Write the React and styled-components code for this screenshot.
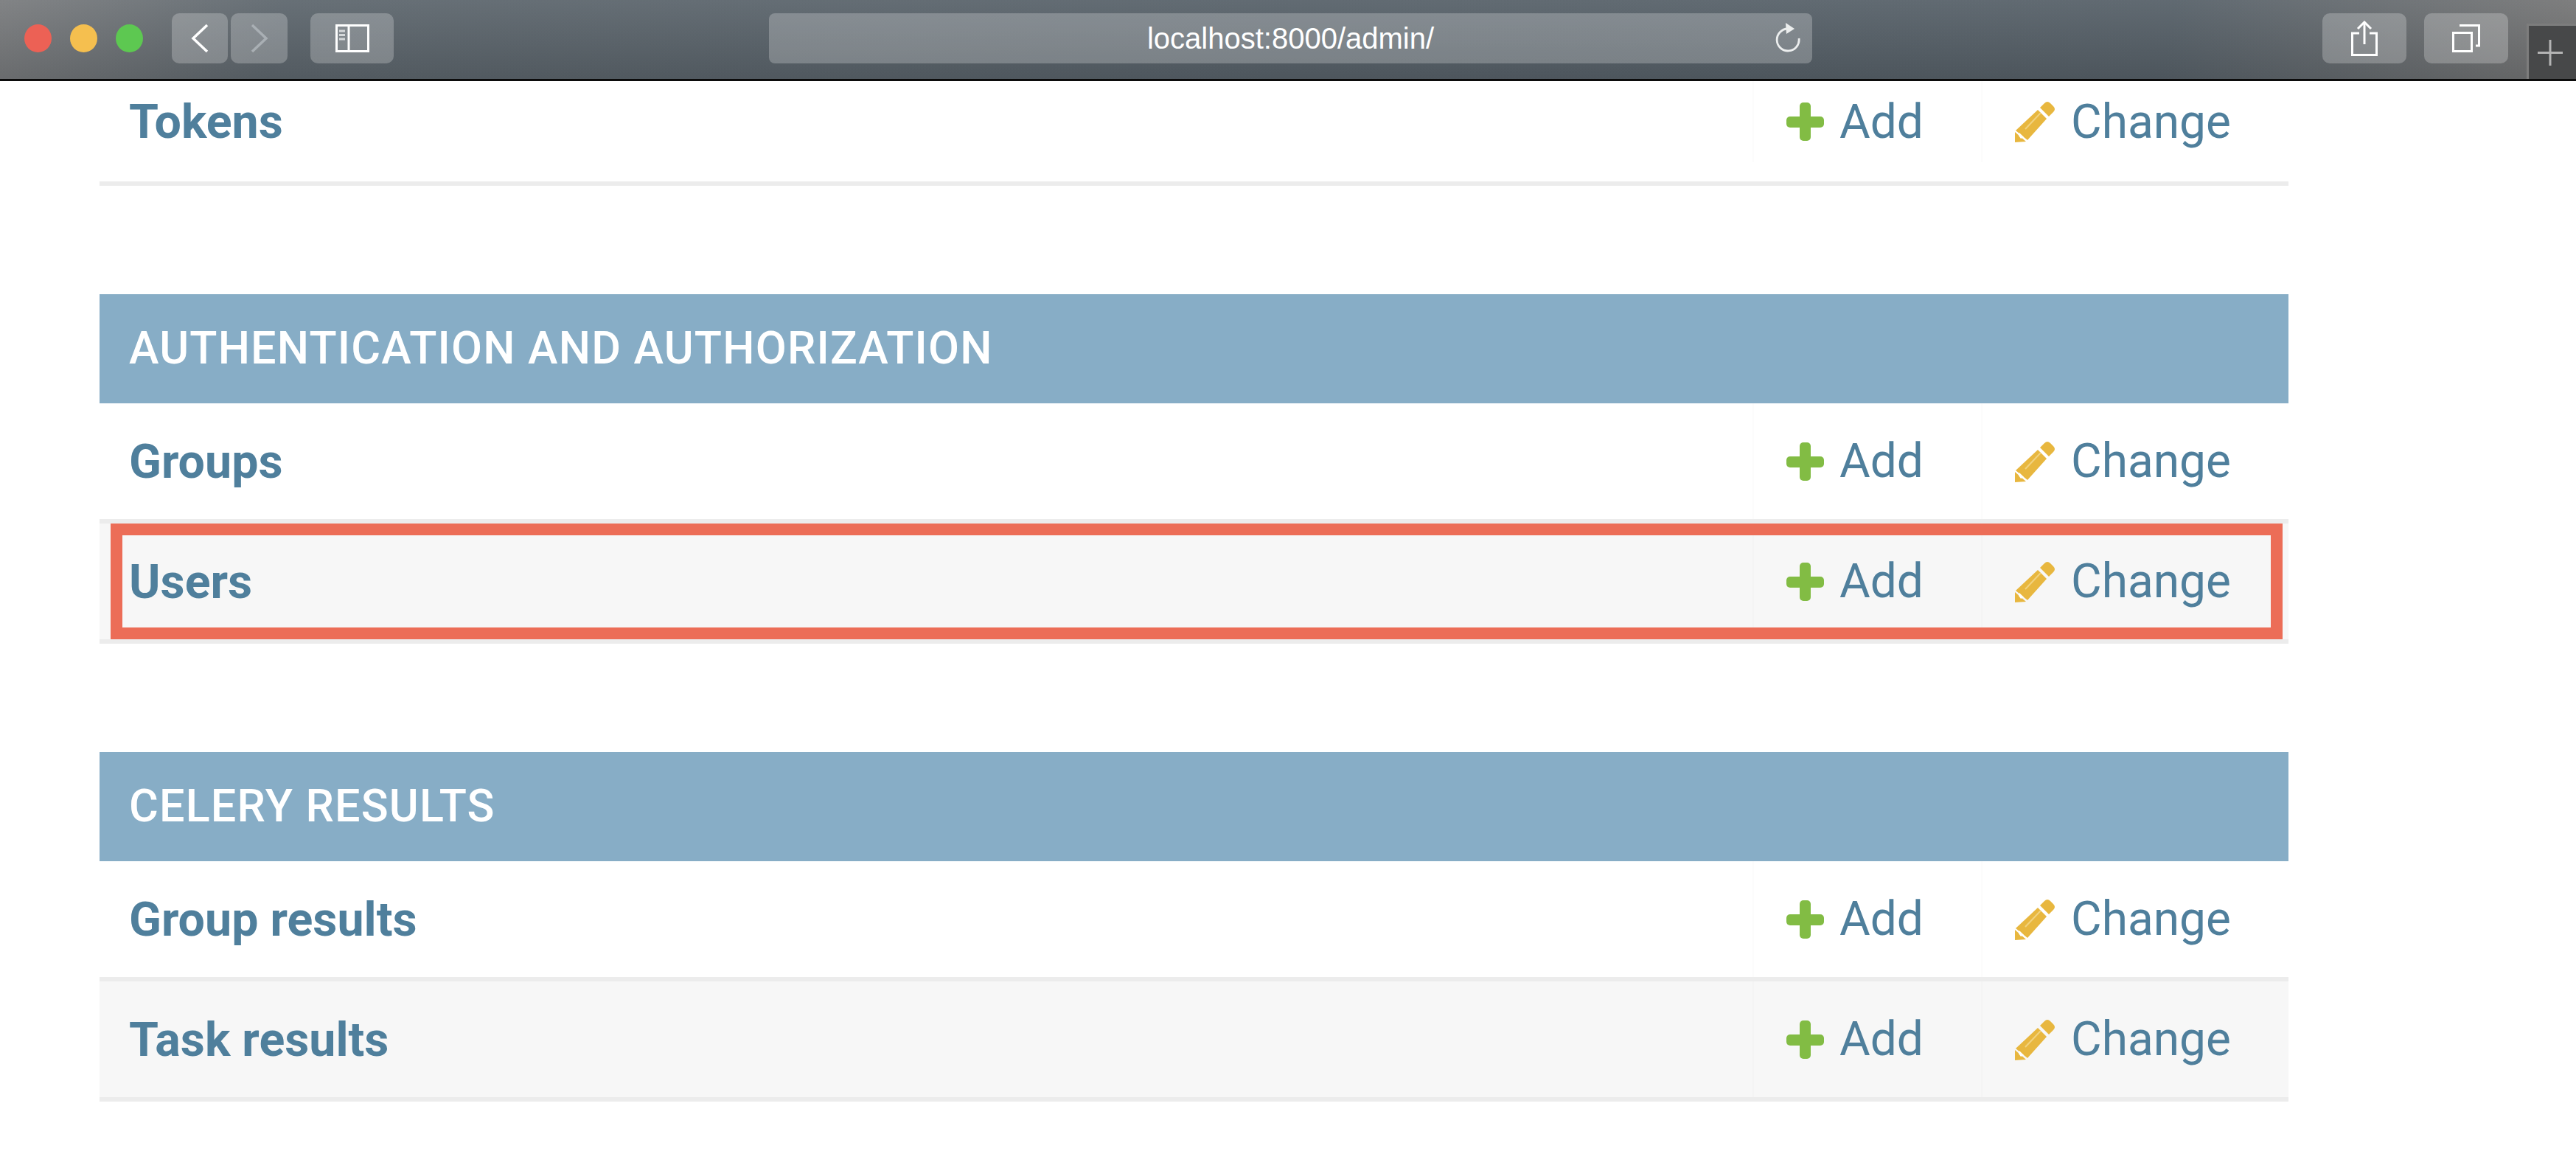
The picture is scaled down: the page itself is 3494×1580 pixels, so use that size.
import styled, { createGlobalStyle } from 'styled-components';

const GlobalStyle = createGlobalStyle`
  html, body {
    margin: 0;
    padding: 0;
    background: #fff;
    overflow: hidden;
  }
  * {
    box-sizing: border-box;
  }
`;

const Page = styled.div`
  width: 3494px;
  height: 1580px;
  overflow: hidden;
  font-family: Roboto, "Liberation Sans", sans-serif;
`;

/* browser chrome */
const Toolbar = styled.div`
  display: flex;
  align-items: flex-start;
  height: 110px;
  padding: 18px 0 0 33px;
  border-bottom: 3px solid #0c0c0c;
  background:
    linear-gradient(180deg, rgba(255, 255, 255, 0.05), rgba(0, 0, 0, 0.13)),
    linear-gradient(100deg, #7b7d7f 0%, #5f686f 11%, #59636b 50%, #58626a 84%, #787878 100%);
`;

const Lights = styled.div`
  display: flex;
  gap: 25px;
  margin: 15px 39px 0 0;
`;

const Light = styled.span`
  width: 37px;
  height: 38px;
  border-radius: 50%;
  background: ${props => props.$color};
`;

const ToolButton = styled.div`
  display: flex;
  align-items: center;
  justify-content: center;
  flex: none;
  width: ${props => props.$width}px;
  height: 68px;
  margin-left: ${props => props.$gap || 0}px;
  border-radius: 10px;
  background: rgba(255, 255, 255, 0.24);
`;

const UrlBar = styled.div`
  display: grid;
  grid-template-columns: 1fr auto 1fr;
  align-items: center;
  flex: none;
  width: 1415px;
  height: 68px;
  margin: 0 692px 0 509px;
  border-radius: 8px;
  background: rgba(255, 255, 255, 0.24);
  color: #fff;
  font-family: "Liberation Sans", Arial, sans-serif;
  font-size: 40px;
`;

const UrlText = styled.span`
  grid-column: 2;
`;

const ReloadSlot = styled.span`
  display: flex;
  justify-content: flex-end;
  padding-right: 16px;
`;

const NewTab = styled.div`
  display: flex;
  align-items: center;
  justify-content: center;
  flex: 1;
  height: 75px;
  margin: 14px 0 0 25px;
  padding-right: 6px;
  border-top: 3px solid #7d7d7d;
  border-left: 3px solid #7d7d7d;
  background: #474849;
`;

/* admin tables */
const Content = styled.div`
  padding: 0 390px 0 135px;
`;

const Section = styled.section`
  margin-bottom: 147px;
`;

const Caption = styled.div`
  display: flex;
  align-items: center;
  height: 148px;
  padding: 0 40px 2px;
  background: #87adc6;
  color: #fff;
  font-size: 61px;
  font-weight: 500;
  letter-spacing: 1.2px;
`;

const Row = styled.div`
  position: relative;
  display: grid;
  grid-template-columns: 1fr 310px 417px;
  align-items: stretch;
  height: ${props => (props.$clipped ? 142 : 163)}px;
  padding-bottom: ${props => (props.$clipped ? 26 : 0)}px;
  border-bottom: 6px solid #ececec;
  background: ${props => (props.$alt ? '#f7f7f7' : '#fff')};
  color: #4f7f9c;
  font-size: 64px;
`;

const Name = styled.div`
  display: flex;
  align-items: center;
  padding-left: 40px;
  font-size: 64.5px;
  font-weight: 700;
`;

const Action = styled.div`
  display: flex;
  align-items: center;
  gap: 21px;
  padding-left: 44px;
  border-left: 2px solid rgba(0, 0, 0, 0.012);
`;

const Highlight = styled.div`
  position: absolute;
  top: 0;
  right: 8px;
  bottom: 0;
  left: 15px;
  border: 16px solid #ec6d57;
`;

const PlusIcon = () => (
  <svg width="51" height="52" viewBox="0 0 51 52">
    <rect x="18" y="0" width="15" height="52" rx="5" fill="#82bc44" />
    <rect x="0" y="19" width="51" height="15" rx="5" fill="#82bc44" />
  </svg>
);

const PencilIcon = () => (
  <svg width="55" height="56" viewBox="0 0 55 56">
    <path d="M34 9 L40 3 Q44 -1 48 3 L52 7 Q56 11 52 15 L46 21 Z" fill="#e8b73f" />
    <path d="M31 12 L43 24 L17 53 L1 40 Z" fill="#e8b73f" />
    <path d="M0 42 L15 55 L0 56 Z" fill="#e8b73f" />
    <path d="M14 38 L35 16" stroke="#f1d27f" strokeWidth="2" />
    <path d="M6 43 L12 49 L8 51 L5 47 Z" fill="#fff" />
  </svg>
);

const BackIcon = ({ color }) => (
  <svg width="24" height="40" viewBox="0 0 24 40" fill="none">
    <path d="M22 2 L3 20 L22 38" stroke={color} strokeWidth="3.5" />
  </svg>
);

const ForwardIcon = ({ color }) => (
  <svg width="24" height="40" viewBox="0 0 24 40" fill="none">
    <path d="M2 2 L21 20 L2 38" stroke={color} strokeWidth="3.5" />
  </svg>
);

const SidebarIcon = () => (
  <svg width="46" height="38" viewBox="0 0 46 38" fill="none">
    <rect x="1.5" y="1.5" width="43" height="35" stroke="#fff" strokeWidth="3" />
    <path d="M18 2 V36" stroke="#fff" strokeWidth="3" />
    <path d="M5 9 H13 M5 14.5 H13 M5 20 H13" stroke="#d5d8da" strokeWidth="3" />
  </svg>
);

const ReloadIcon = () => (
  <svg width="34" height="42" viewBox="0 0 34 42" fill="none">
    <path d="M17 8 A15 15 0 1 0 32 21" stroke="#eceeee" strokeWidth="2.8" />
    <path d="M14 0 L26 8 L15 15 Z" fill="#eceeee" />
  </svg>
);

const ShareIcon = () => (
  <svg width="36" height="48" viewBox="0 0 36 48" fill="none">
    <path d="M11 17 H1.5 V46.5 H34.5 V17 H25" stroke="#fff" strokeWidth="3" />
    <path d="M18 2 V32" stroke="#fff" strokeWidth="3" />
    <path d="M9 11 L18 2 L27 11" stroke="#fff" strokeWidth="3" />
  </svg>
);

const TabsIcon = () => (
  <svg width="38" height="38" viewBox="0 0 38 38" fill="none">
    <rect x="1.5" y="11.5" width="25" height="25" stroke="#fff" strokeWidth="3" />
    <path d="M10 1.5 H36.5 V29 H32" stroke="#fff" strokeWidth="3" />
  </svg>
);

const NewTabIcon = () => (
  <svg width="34" height="35" viewBox="0 0 34 35" fill="none">
    <path d="M17 0 V35 M0 17.5 H34" stroke="#b4b4b4" strokeWidth="3" />
  </svg>
);

const AdminRow = ({ name, alt, clipped, highlighted }) => (
  <Row $alt={alt} $clipped={clipped}>
    <Name>{name}</Name>
    <Action>
      <PlusIcon />
      Add
    </Action>
    <Action>
      <PencilIcon />
      Change
    </Action>
    {highlighted && <Highlight />}
  </Row>
);

const App = () => {
  return (
    <Page>
      <GlobalStyle />
      <Toolbar>
        <Lights>
          <Light $color="#ec6155" />
          <Light $color="#f5bf4f" />
          <Light $color="#5dc851" />
        </Lights>
        <ToolButton $width={76}><BackIcon color="#fff" /></ToolButton>
        <ToolButton $width={77} $gap={4}><ForwardIcon color="#a9afb4" /></ToolButton>
        <ToolButton $width={113} $gap={31}><SidebarIcon /></ToolButton>
        <UrlBar>
          <UrlText>localhost:8000/admin/</UrlText>
          <ReloadSlot><ReloadIcon /></ReloadSlot>
        </UrlBar>
        <ToolButton $width={114}><ShareIcon /></ToolButton>
        <ToolButton $width={114} $gap={24}><TabsIcon /></ToolButton>
        <NewTab><NewTabIcon /></NewTab>
      </Toolbar>
      <Content>
        <Section>
          <AdminRow name="Tokens" clipped />
        </Section>
        <Section>
          <Caption>AUTHENTICATION AND AUTHORIZATION</Caption>
          <AdminRow name="Groups" />
          <AdminRow name="Users" alt highlighted />
        </Section>
        <Section>
          <Caption>CELERY RESULTS</Caption>
          <AdminRow name="Group results" />
          <AdminRow name="Task results" alt />
        </Section>
      </Content>
    </Page>
  );
};

export default App;
